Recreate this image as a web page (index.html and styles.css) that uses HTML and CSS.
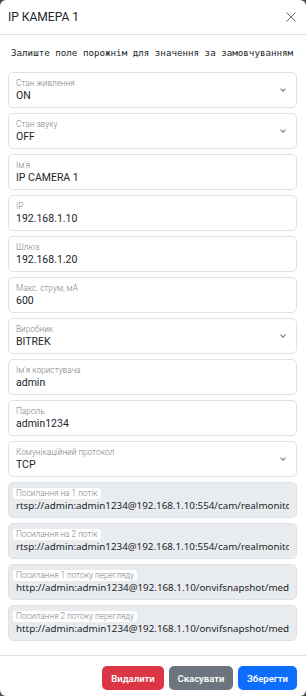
FILE: index.html
```html
<!DOCTYPE html>
<html lang="uk">
<head>
  <meta charset="UTF-8">
  <title>IP КАМЕРА 1</title>
  <link rel="stylesheet" href="styles.css">
</head>
<body>
  <div class="modal">
    <div class="modal-header">
      <h5 class="modal-title">IP КАМЕРА 1</h5>
      <button class="btn-close" aria-label="Закрити">
        <svg width="10" height="10" viewBox="0 0 10 10"><path d="M0.5 0.5L9.5 9.5M9.5 0.5L0.5 9.5" stroke="#6c6c6c" stroke-width="1" fill="none"/></svg>
      </button>
    </div>

    <div class="modal-body">
      <p class="hint">Залиште поле порожнім для значення за замовчуванням</p>

      <div class="fields">
        <div class="field select">
          <label>Стан живлення</label>
          <div class="value">ON</div>
        </div>
        <div class="field select">
          <label>Стан звуку</label>
          <div class="value">OFF</div>
        </div>
        <div class="field">
          <label>Ім'я</label>
          <div class="value">IP CAMERA 1</div>
        </div>
        <div class="field">
          <label>IP</label>
          <div class="value">192.168.1.10</div>
        </div>
        <div class="field">
          <label>Шлюз</label>
          <div class="value">192.168.1.20</div>
        </div>
        <div class="field">
          <label>Макс. струм, мА</label>
          <div class="value">600</div>
        </div>
        <div class="field select">
          <label>Виробник</label>
          <div class="value">BITREK</div>
        </div>
        <div class="field">
          <label>Ім'я користувача</label>
          <div class="value">admin</div>
        </div>
        <div class="field">
          <label>Пароль</label>
          <div class="value">admin1234</div>
        </div>
        <div class="field select">
          <label>Комунікаційний протокол</label>
          <div class="value">TCP</div>
        </div>
        <div class="field disabled">
          <label>Посилання на 1 потік</label>
          <div class="value">rtsp://admin:admin1234@192.168.1.10:554/cam/realmonitor?channel=1&amp;subtype=0</div>
        </div>
        <div class="field disabled">
          <label>Посилання на 2 потік</label>
          <div class="value">rtsp://admin:admin1234@192.168.1.10:554/cam/realmonitor?channel=1&amp;subtype=1</div>
        </div>
        <div class="field disabled">
          <label>Посилання 1 потоку перегляду</label>
          <div class="value">http://admin:admin1234@192.168.1.10/onvifsnapshot/media_service/snapshot?channel=1</div>
        </div>
        <div class="field disabled">
          <label>Посилання 2 потоку перегляду</label>
          <div class="value">http://admin:admin1234@192.168.1.10/onvifsnapshot/media_service/snapshot?channel=2</div>
        </div>
      </div>
    </div>

    <div class="modal-footer">
      <button class="btn btn-danger">Видалити</button>
      <button class="btn btn-secondary">Скасувати</button>
      <button class="btn btn-primary">Зберегти</button>
    </div>
  </div>
</body>
</html>
```

FILE: styles.css
```css
html, body {
  margin: 0;
  padding: 0;
  height: 100%;
}
body {
  background-color: #4a4a4a;
  font-family: Roboto, "Noto Sans", sans-serif;
  color: #212529;
}
.modal {
  background-color: #fff;
  height: 696px;
  border-radius: 6px;
  display: flex;
  flex-direction: column;
  overflow: hidden;
}
.modal-header {
  height: 35px;
  box-sizing: border-box;
  border-bottom: 1px solid #dee2e6;
  display: flex;
  align-items: center;
  justify-content: space-between;
  padding: 0 10px 0 8px;
}
.modal-title {
  margin: 0;
  font-size: 12px;
  font-weight: 400;
}
.btn-close {
  border: none;
  background: none;
  padding: 0;
  width: 10px;
  height: 10px;
  display: flex;
}
.modal-body {
  flex: 1;
  padding: 0 9px 0 8px;
}
.hint {
  margin: 11px 0 12px 3px;
  font-family: "DejaVu Sans Mono", monospace;
  font-size: 9.2px;
  line-height: 14px;
  color: #212529;
}
.fields {
  display: flex;
  flex-direction: column;
  gap: 5px;
}
.field {
  position: relative;
  height: 36px;
  box-sizing: border-box;
  border: 1px solid #dee2e6;
  border-radius: 5px;
  padding: 5px 7px 0 7px;
  background-color: #fff;
}
.field label {
  display: block;
  font-size: 8.3px;
  font-weight: 300;
  line-height: 11px;
  color: #7a7f85;
}
.field .value {
  font-size: 10.5px;
  line-height: 14px;
  white-space: nowrap;
  overflow: hidden;
}
.field.select::after {
  content: "";
  position: absolute;
  right: 11px;
  top: 14px;
  width: 3px;
  height: 3px;
  border-right: 1px solid #6c757d;
  border-bottom: 1px solid #6c757d;
  transform: rotate(45deg);
}
.field.disabled {
  background-color: #e9ecef;
  padding-left: 4px;
}
.field.disabled label {
  width: fit-content;
  background-color: #fff;
  border-radius: 3px;
  padding: 0 3px;
  color: #808589;
}
.field.disabled .value {
  font-family: "Noto Sans", "Open Sans", sans-serif;
  font-size: 9.8px;
  padding-left: 3px;
}
.modal-footer {
  height: 41px;
  box-sizing: border-box;
  border-top: 1px solid #dee2e6;
  display: flex;
  justify-content: flex-end;
  align-items: flex-start;
  gap: 5px;
  padding: 10px 9px 0 8px;
}
.btn {
  height: 24px;
  border: none;
  border-radius: 5px;
  color: #fff;
  font-family: Roboto, sans-serif;
  font-size: 9.5px;
  font-weight: 600;
  padding: 0 8px;
}
.btn-danger {
  background-color: #dc3545;
  width: 62px;
}
.btn-secondary {
  background-color: #6c757d;
  width: 64px;
}
.btn-primary {
  background-color: #0d6efd;
  width: 59px;
}
```
